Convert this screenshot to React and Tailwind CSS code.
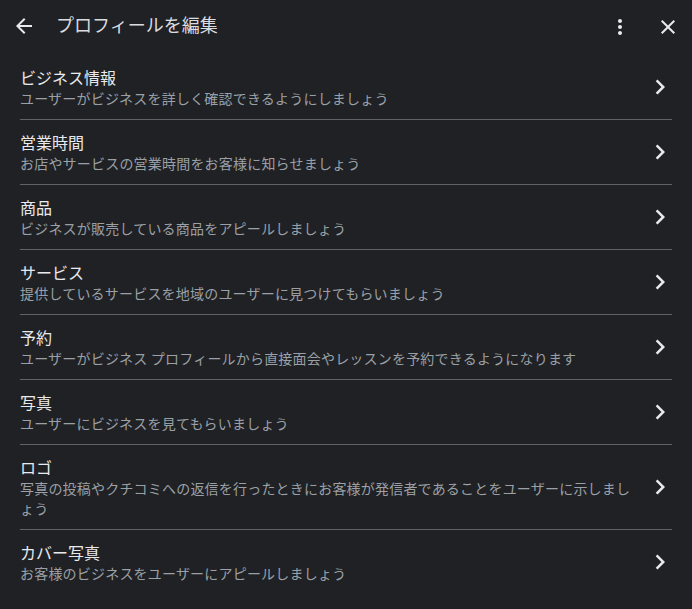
const items = [
  { title: "ビジネス情報", desc: "ユーザーがビジネスを詳しく確認できるようにしましょう" },
  { title: "営業時間", desc: "お店やサービスの営業時間をお客様に知らせましょう" },
  { title: "商品", desc: "ビジネスが販売している商品をアピールしましょう" },
  { title: "サービス", desc: "提供しているサービスを地域のユーザーに見つけてもらいましょう" },
  { title: "予約", desc: "ユーザーがビジネス プロフィールから直接面会やレッスンを予約できるようになります" },
  { title: "写真", desc: "ユーザーにビジネスを見てもらいましょう" },
  { title: "ロゴ", desc: "写真の投稿やクチコミへの返信を行ったときにお客様が発信者であることをユーザーに示しましょう" },
  { title: "カバー写真", desc: "お客様のビジネスをユーザーにアピールしましょう" },
];

const font = { fontFamily: '"Noto Sans CJK JP", "Noto Sans", sans-serif' };

const ChevronRight = () => (
  <svg viewBox="0 0 24 24" className="w-[30px] h-[30px] shrink-0 -mr-[3px]" fill="#e8eaed">
    <path d="M10 6L8.59 7.41 13.17 12l-4.58 4.59L10 18l6-6z" />
  </svg>
);

export default function App() {
  return (
    <div className="w-[692px] h-[609px] bg-[#202124] overflow-hidden" style={font}>
      {/* header */}
      <div className="h-[55px] flex items-center pl-3 pr-3">
        <button className="w-6 h-6 flex items-center justify-center -mt-[3px]">
          <svg viewBox="0 0 24 24" className="w-6 h-6" fill="#e8eaed">
            <path d="M20 11H7.83l5.59-5.59L12 4l-8 8 8 8 1.41-1.41L7.83 13H20v-2z" />
          </svg>
        </button>
        <h1 className="ml-5 text-[18px] text-[#dadce0] flex-1 leading-6 -mt-[7px]">プロフィールを編集</h1>
        <button className="w-6 h-6 flex items-center justify-center mr-6 -mt-0.5">
          <svg viewBox="0 0 24 24" className="w-6 h-6" fill="#e8eaed">
            <path d="M12 8c1.1 0 2-.9 2-2s-.9-2-2-2-2 .9-2 2 .9 2 2 2zm0 2c-1.1 0-2 .9-2 2s.9 2 2 2 2-.9 2-2-.9-2-2-2zm0 6c-1.1 0-2 .9-2 2s.9 2 2 2 2-.9 2-2-.9-2-2-2z" />
          </svg>
        </button>
        <button className="w-6 h-6 flex items-center justify-center -mt-0.5">
          <svg viewBox="0 0 24 24" className="w-6 h-6" fill="#e8eaed">
            <path d="M19 6.41L17.59 5 12 10.59 6.41 5 5 6.41 10.59 12 5 17.59 6.41 19 12 13.41 17.59 19 19 17.59 13.41 12z" />
          </svg>
        </button>
      </div>

      {/* list */}
      <div className="px-5">
        {items.map((item, i) => (
          <div
            key={item.title}
            className={`flex items-center gap-[10px] py-[11px] ${i < items.length - 1 ? "border-b border-[#5f6368]" : ""}`}
          >
            <div className="flex-1 min-w-0">
              <p className="text-[16px] leading-[22px] text-[#e8eaed]">{item.title}</p>
              <p className="text-[14px] leading-5 tracking-[0.2px] text-[#9aa0a6]">{item.desc}</p>
            </div>
            <ChevronRight />
          </div>
        ))}
      </div>
    </div>
  );
}
